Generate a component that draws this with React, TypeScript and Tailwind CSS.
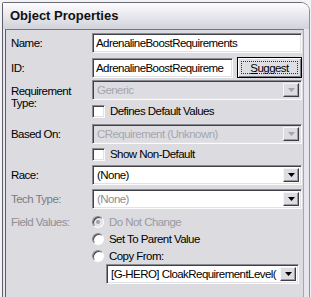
const SUNKEN =
  "border border-t-[#8a8a92] border-l-[#8a8a92] border-b-[#fbfbfb] border-r-[#fbfbfb] shadow-[inset_1px_1px_0_#404048,inset_-1px_-1px_0_#e2e2e6]";

function Arrow({ disabled }: { disabled?: boolean }) {
  return (
    <div className="flex h-full w-[16px] shrink-0 items-center justify-center border border-t-[#f6f6f8] border-l-[#f6f6f8] border-b-[#3c3c44] border-r-[#3c3c44] bg-[#dcdce1] shadow-[inset_-1px_-1px_0_#9c9ca4]">
      <svg width="7" height="4" viewBox="0 0 7 4">
        <path d="M0 0h7L3.5 4z" fill={disabled ? "#a4a4ac" : "#000"} />
      </svg>
    </div>
  );
}

function Combo({ value, disabled, muted }: { value: string; disabled?: boolean; muted?: boolean }) {
  return (
    <div className={`flex h-[20px] w-full min-w-0 items-stretch p-[2px] ${SUNKEN} ${disabled ? "bg-[#dcdce1]" : "bg-white"}`}>
      <span
        className={`min-w-0 flex-1 overflow-hidden whitespace-nowrap pl-[2px] leading-[15px] ${
          disabled ? "text-[#a6a6ae]" : muted ? "text-[#8c8c94]" : "text-black"
        }`}
      >
        {value}
      </span>
      <Arrow disabled={disabled} />
    </div>
  );
}

function Field({ value, className = "" }: { value: string; className?: string }) {
  return (
    <div className={`flex h-[20px] min-w-0 items-center overflow-hidden whitespace-nowrap bg-white pl-[3px] ${SUNKEN} ${className}`}>
      {value}
    </div>
  );
}

function Check({ label }: { label: string }) {
  return (
    <div className="flex h-[14px] items-center gap-[5px] pl-[81px]">
      <div className={`h-[13px] w-[13px] shrink-0 bg-white ${SUNKEN}`} />
      <span>{label}</span>
    </div>
  );
}

function Radio({ label, disabled, checked }: { label: string; disabled?: boolean; checked?: boolean }) {
  return (
    <div className="flex h-[14px] items-center gap-[5px] pl-[81px]">
      <div
        className={`flex h-[12px] w-[12px] shrink-0 items-center justify-center rounded-full border border-t-[#8a8a92] border-l-[#8a8a92] border-b-white border-r-white shadow-[inset_1px_1px_0_#404048] ${
          disabled ? "bg-[#e4e4e8]" : "bg-white"
        }`}
      >
        {checked && <div className="h-[4px] w-[4px] rounded-full bg-[#a0a0a8]" />}
      </div>
      <span className={disabled ? "text-[#9a9aa2]" : "text-black"}>{label}</span>
    </div>
  );
}

function Row({ label, children, labelClass = "" }: { label: React.ReactNode; children: React.ReactNode; labelClass?: string }) {
  return (
    <div className="flex min-w-0 items-center">
      <div className={`w-[81px] shrink-0 ${labelClass}`}>{label}</div>
      <div className="min-w-0 flex-1">{children}</div>
    </div>
  );
}

export default function App() {
  return (
    <div className="h-[297px] w-[311px] overflow-hidden bg-[#f3f3f5] pl-[2px] pr-[1px] pt-[2px] font-['Liberation_Sans',Arial,sans-serif] text-[11.5px] leading-[14px] tracking-[-0.55px] text-black">
      <div className="flex h-[310px] w-[308px] flex-col rounded-tr-[9px] rounded-tl-[2px] border border-l-[#5e5e6a] border-t-[#6a6a76] border-r-[#8e8e9a] bg-[#e6e6ec]">
        <div className="flex h-[26px] shrink-0 items-center rounded-tr-[8px] bg-gradient-to-b from-[#fdfdfe] to-[#d2d2db] pl-[7px] text-[13px] font-bold tracking-normal text-[#111]">
          Object Properties
        </div>
        <div className="flex min-w-0 flex-1 pl-[2px] pr-[5px]">
          <div className="flex min-w-0 flex-1 flex-col border-l border-t border-r border-l-[#5e5e6a] border-t-[#75757f] border-r-[#a6a6b0] bg-[#dbdbe0] pl-[5px] pr-[1px] pt-[3px]">
            <Row label="Name:">
              <Field value="AdrenalineBoostRequirements" />
            </Row>
            <div className="mt-[4px]">
              <Row label="ID:">
                <div className="flex min-w-0 items-center gap-[4px]">
                  <Field value="AdrenalineBoostRequireme" className="w-[141px] shrink-0" />
                  <div className="flex h-[21px] min-w-0 flex-1 border border-black bg-[#dfdfe3] shadow-[inset_1px_1px_0_#ffffff,inset_-1px_-1px_0_#7e7e86]">
                    <div className="m-[3px] flex flex-1 items-center justify-center border border-dotted border-[#333]">
                      <span>
                        <span className="underline">S</span>uggest
                      </span>
                    </div>
                  </div>
                </div>
              </Row>
            </div>
            <div className="mt-[2px]">
              <Row
                label={
                  <div className="h-[20px] pt-[5px] leading-[12px]">
                    Requirement
                    <br />
                    Type:
                  </div>
                }
                labelClass="self-start"
              >
                <Combo value="Generic" disabled />
              </Row>
            </div>
            <div className="mt-[4px]">
              <Check label="Defines Default Values" />
            </div>
            <div className="mt-[6px]">
              <Row label="Based On:">
                <Combo value="CRequirement (Unknown)" disabled />
              </Row>
            </div>
            <div className="mt-[3px]">
              <Check label="Show Non-Default" />
            </div>
            <div className="mt-[4px]">
              <Row label="Race:">
                <Combo value="(None)" />
              </Row>
            </div>
            <div className="mt-[4px]">
              <Row label="Tech Type:" labelClass="text-[#7c7c84]">
                <Combo value="(None)" muted />
              </Row>
            </div>
            <div className="relative mt-[6px]">
              <div className="absolute left-0 top-0 text-[#8e8e96]">Field Values:</div>
              <Radio label="Do Not Change" disabled checked />
            </div>
            <div className="mt-[3px]">
              <Radio label="Set To Parent Value" />
            </div>
            <div className="mt-[3px]">
              <Radio label="Copy From:" />
            </div>
            <div className="ml-[95px] mr-[3px] mt-[1px]">
              <Combo value="[G-HERO] CloakRequirementLevel(" />
            </div>
          </div>
        </div>
      </div>
    </div>
  );
}
